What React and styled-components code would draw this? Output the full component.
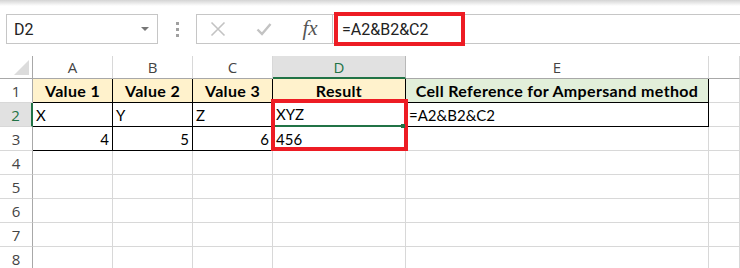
import React from "react";
import styled, { createGlobalStyle } from "styled-components";

const GlobalStyle = createGlobalStyle`
  html, body {
    margin: 0;
    padding: 0;
    background: #ffffff;
    overflow: hidden;
  }
`;

const Page = styled.div`
  width: 740px;
  height: 268px;
  position: relative;
  overflow: hidden;
  background: #fff;
`;

const TopShade = styled.div`
  height: 6px;
  background: linear-gradient(#d4d4d4, #ffffff);
`;

const FormulaBar = styled.div`
  position: relative;
  display: flex;
  align-items: stretch;
  height: 30px;
  margin-top: 8px;
  padding-left: 6px;
`;

const NameBox = styled.div`
  width: 152px;
  box-sizing: border-box;
  border: 1px solid #c6c6c6;
  display: flex;
  align-items: center;
  justify-content: space-between;
  padding: 0 8px 0 7px;
  font-family: Roboto, "Open Sans", sans-serif;
  font-size: 16px;
  color: #222;
`;

const Caret = styled.span`
  width: 0;
  height: 0;
  border-left: 4px solid transparent;
  border-right: 4px solid transparent;
  border-top: 4px solid #777;
`;

const Grip = styled.div`
  width: 38px;
  display: flex;
  flex-direction: column;
  align-items: center;
  justify-content: center;
  gap: 3px;

  span {
    width: 3px;
    height: 3px;
    background: #a0a0a0;
  }
`;

const ButtonBox = styled.div`
  width: 137px;
  box-sizing: border-box;
  border: 1px solid #c6c6c6;
  display: flex;
  align-items: center;
  gap: 30px;
  padding-left: 13px;
`;

const IconButton = styled.span`
  width: 16px;
  display: flex;
  align-items: center;
  justify-content: center;
`;

const Fx = styled.span`
  font-family: "Liberation Serif", serif;
  font-style: italic;
  font-size: 21px;
  line-height: 1;
  color: #555;
  margin-top: -2px;
`;

const FormulaInput = styled.div`
  flex: 1;
  border-top: 1px solid #c6c6c6;
  border-bottom: 1px solid #c6c6c6;
  display: flex;
  align-items: center;
  padding-left: 9px;
  font-family: Roboto, "Open Sans", sans-serif;
  font-size: 16px;
  color: #222;
`;

const Highlight = styled.div`
  position: absolute;
  box-sizing: border-box;
  border: 4px solid #ed1c24;
  pointer-events: none;
`;

const Sheet = styled.div`
  position: relative;
  margin-top: 12px;
  display: grid;
  grid-template-columns: 33px 80px 80px 80px 133px 303px 1fr;
  grid-template-rows: 23px repeat(8, 24px);
`;

const Corner = styled.div`
  box-sizing: border-box;
  border-right: 1px solid #a8a8a8;
  border-bottom: 1px solid #a8a8a8;
  position: relative;

  &::after {
    content: "";
    position: absolute;
    right: 3px;
    bottom: 3px;
    border-left: 15px solid transparent;
    border-bottom: 15px solid #dcdcdc;
  }
`;

const ColHead = styled.div`
  box-sizing: border-box;
  background: ${(p) => (p.$active ? "#e1e1e1" : "#ffffff")};
  border-right: 1px solid ${(p) => (p.$active ? "#b8b8b8" : "#d8d8d8")};
  border-bottom: ${(p) => (p.$active ? "2px solid #217346" : "1px solid #a8a8a8")};
  display: flex;
  align-items: center;
  justify-content: center;
  font-family: "Open Sans", sans-serif;
  font-size: 15px;
  color: ${(p) => (p.$active ? "#217346" : "#444")};
`;

const RowHead = styled.div`
  box-sizing: border-box;
  background: ${(p) => (p.$active ? "#e1e1e1" : "#ffffff")};
  border-right: ${(p) => (p.$active ? "2px solid #217346" : "1px solid #a8a8a8")};
  border-bottom: 1px solid #d8d8d8;
  display: flex;
  align-items: center;
  justify-content: center;
  font-family: "Open Sans", sans-serif;
  font-size: 15px;
  color: ${(p) => (p.$active ? "#217346" : "#444")};
`;

const Cell = styled.div`
  box-sizing: border-box;
  background: ${(p) => p.$fill || "#ffffff"};
  border-right: 1px solid ${(p) => (p.$boxed ? "#000" : "#d8d8d8")};
  border-bottom: ${(p) =>
    p.$selected ? "2px solid #217346" : `1px solid ${p.$boxed ? "#000" : "#d8d8d8"}`};
  display: flex;
  align-items: center;
  justify-content: ${(p) =>
    p.$align === "right" ? "flex-end" : p.$align === "center" ? "center" : "flex-start"};
  padding: 0 3px;
  font-family: Lato, "Liberation Sans", sans-serif;
  font-size: ${(p) => (p.$bold ? "16px" : "15px")};
  letter-spacing: ${(p) => (p.$bold ? "0.35px" : "0")};
  font-weight: ${(p) => (p.$bold ? 700 : 400)};
  color: #000;
  white-space: nowrap;
  overflow: visible;
  position: relative;
`;

const FillHandle = styled.span`
  position: absolute;
  right: 0;
  bottom: -3px;
  width: 4px;
  height: 4px;
  background: #217346;
  z-index: 1;
`;

const cols = ["A", "B", "C", "D", "E", ""];
const PEACH = "#fff2cc";
const MINT = "#e2efda";

const rows = [
  [
    { t: "Value 1", fill: PEACH, bold: true, align: "center", boxed: true },
    { t: "Value 2", fill: PEACH, bold: true, align: "center", boxed: true },
    { t: "Value 3", fill: PEACH, bold: true, align: "center", boxed: true },
    { t: "Result", fill: PEACH, bold: true, align: "center", boxed: true },
    { t: "Cell Reference for Ampersand method", fill: MINT, bold: true, align: "center", boxed: true },
    {},
  ],
  [
    { t: "X", boxed: true },
    { t: "Y", boxed: true },
    { t: "Z", boxed: true },
    { t: "XYZ", selected: true, boxed: true },
    { t: "=A2&B2&C2", boxed: true },
    {},
  ],
  [
    { t: "4", align: "right", boxed: true },
    { t: "5", align: "right", boxed: true },
    { t: "6", align: "right", boxed: true },
    { t: "456", boxed: true },
    {},
    {},
  ],
];

const CrossIcon = () => (
  <svg width="16" height="16" viewBox="0 0 16 16">
    <path d="M1.5 1.5 L14.5 14.5 M14.5 1.5 L1.5 14.5" stroke="#c3c3c3" strokeWidth="1.6" fill="none" />
  </svg>
);

const CheckIcon = () => (
  <svg width="16" height="16" viewBox="0 0 16 16">
    <path d="M1.5 8.5 L6 13 L14.5 3" stroke="#c3c3c3" strokeWidth="2.4" fill="none" />
  </svg>
);

export default function App() {
  const allRows = [...rows];
  while (allRows.length < 8) allRows.push([{}, {}, {}, {}, {}, {}]);

  return (
    <Page>
      <GlobalStyle />
      <TopShade />
      <FormulaBar>
        <NameBox>
          D2
          <Caret />
        </NameBox>
        <Grip>
          <span />
          <span />
          <span />
        </Grip>
        <ButtonBox>
          <IconButton>
            <CrossIcon />
          </IconButton>
          <IconButton>
            <CheckIcon />
          </IconButton>
          <IconButton>
            <Fx>fx</Fx>
          </IconButton>
        </ButtonBox>
        <FormulaInput>=A2&amp;B2&amp;C2</FormulaInput>
        <Highlight style={{ left: 334, top: -2, width: 131, height: 34 }} />
      </FormulaBar>
      <Sheet>
        <Corner />
        {cols.map((c, i) => (
          <ColHead key={i} $active={c === "D"}>
            {c}
          </ColHead>
        ))}
        {allRows.map((r, ri) => (
          <React.Fragment key={ri}>
            <RowHead $active={ri === 1}>{ri + 1}</RowHead>
            {r.map((cell, ci) => (
              <Cell
                key={ci}
                $fill={cell.fill}
                $bold={cell.bold}
                $align={cell.align}
                $boxed={cell.boxed}
                $selected={cell.selected}
              >
                {cell.t}
                {cell.selected && <FillHandle />}
              </Cell>
            ))}
          </React.Fragment>
        ))}
        <Highlight style={{ left: 271, top: 43, width: 137, height: 52 }} />
      </Sheet>
    </Page>
  );
}
